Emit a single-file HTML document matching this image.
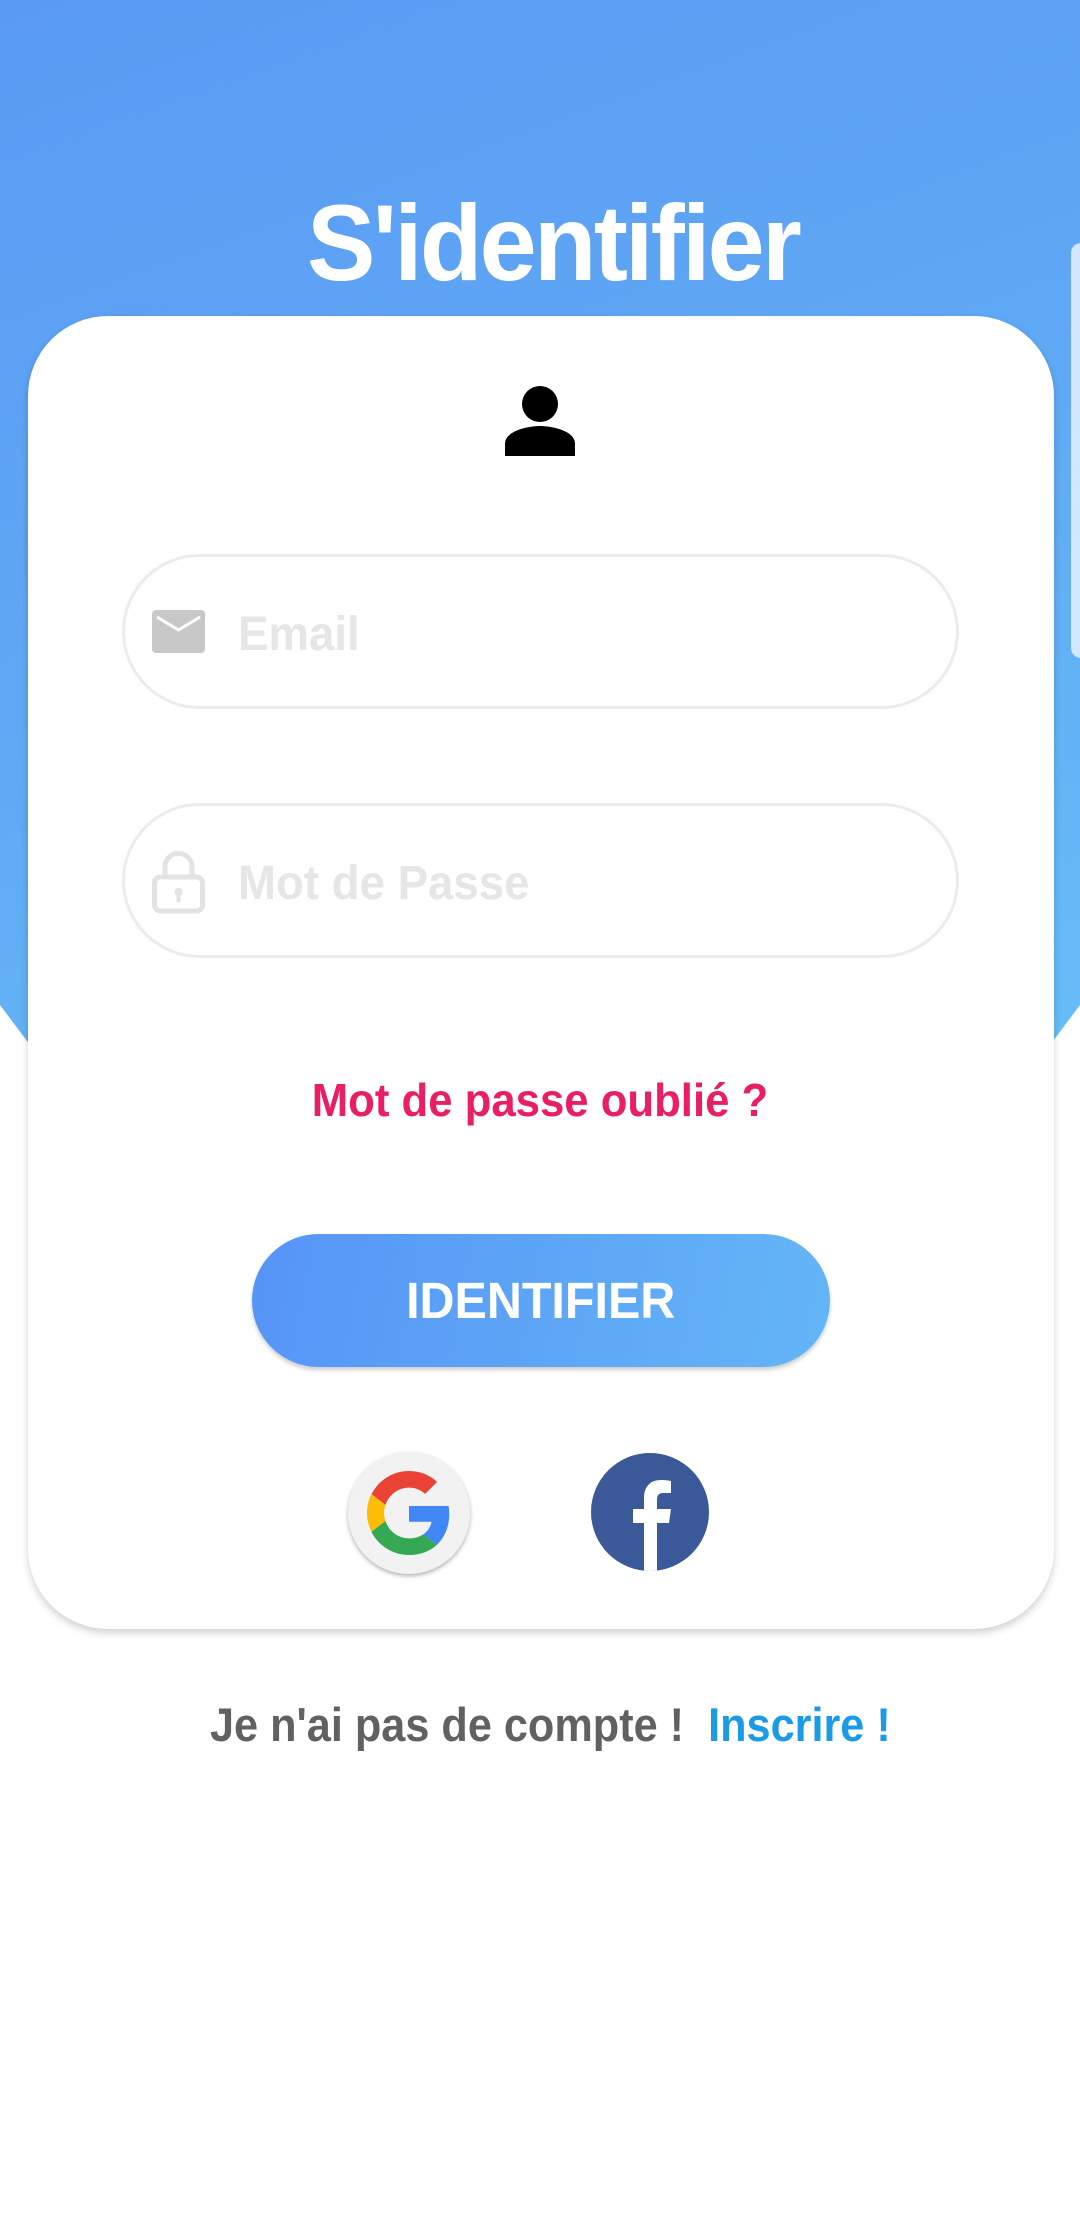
<!DOCTYPE html>
<html><head><meta charset="utf-8"><style>
*{margin:0;padding:0;box-sizing:border-box}
body{width:1080px;height:2220px;background:#fff;position:relative;overflow:hidden;font-family:"Liberation Sans",Arial,sans-serif;font-weight:bold}
.bg{position:absolute;left:0;top:0;width:1080px;height:1045px;background:linear-gradient(160deg,#5a9af3 0%,#60aaf5 55%,#66bdf7 100%);clip-path:polygon(0 0,1080px 0,1080px 1005px,1050px 1045px,30px 1045px,0 1005px)}
.side{position:absolute;left:1071px;top:243px;width:20px;height:415px;border-radius:10px;background:rgba(230,242,255,0.85)}
.title{position:absolute;left:13px;width:1080px;top:180px;text-align:center;color:#fff;font-size:108px;letter-spacing:-3px;transform:scaleX(0.95)}
.card{position:absolute;left:28px;top:316px;width:1026px;height:1313px;background:#fff;border-radius:80px;box-shadow:0 4px 8px rgba(0,0,0,0.18)}
.field{position:absolute;left:122px;width:837px;height:155px;border:3px solid #ececec;border-radius:80px}
.ph{position:absolute;left:113px;top:50px;font-size:48px;color:#e6e6e6;transform:scaleX(0.95);transform-origin:left}
.forgot{position:absolute;left:0;width:1080px;top:1073px;text-align:center;color:#e91e63;font-size:46px;transform:scaleX(0.95)}
.btn{position:absolute;left:252px;top:1234px;width:578px;height:133px;border-radius:67px;background:linear-gradient(100deg,#5694f6,#64b6f6);box-shadow:0 3px 4px rgba(0,0,0,0.2);color:#fff;font-size:51px;text-align:center;line-height:133px}
.btn span{display:inline-block;transform:scaleX(0.95)}
.g{position:absolute;left:348px;top:1452px;width:122px;height:122px;border-radius:50%;background:#f2f2f2;box-shadow:0 2px 4px rgba(0,0,0,0.3)}
.bottom{position:absolute;left:210px;top:1697px;font-size:47px;color:#616161;white-space:nowrap;transform:scaleX(0.92);transform-origin:left}
</style></head><body>
<div class="bg"></div>
<div class="side"></div>
<div class="title">S'identifier</div>
<div class="card"></div>
<svg style="position:absolute;left:505px;top:386px" width="70" height="70" viewBox="0 0 70 70"><circle cx="35" cy="18" r="18" fill="#000"/><path d="M0 70 V58 C0 44 25 40 35 40 C45 40 70 44 70 58 V70 Z" fill="#000"/></svg>
<div class="field" style="top:554px">
<svg style="position:absolute;left:27px;top:53px" width="53" height="43" viewBox="0 0 53 43"><rect width="53" height="43" rx="4" fill="#c8c8c8"/><path d="M5 7 L26.5 20 L48 7" stroke="#fff" stroke-width="3" fill="none"/></svg>
<div class="ph">Email</div></div>
<div class="field" style="top:803px">
<svg style="position:absolute;left:27px;top:45px" width="53" height="63" viewBox="0 0 53 63"><path d="M13 27 V16 A13.5 13.5 0 0 1 40 16 V27" stroke="#e3e3e3" stroke-width="5" fill="none"/><rect x="2.5" y="26" width="48" height="34" rx="6" stroke="#e3e3e3" stroke-width="5" fill="none"/><circle cx="26.5" cy="41" r="4" fill="#e3e3e3"/><rect x="24.5" y="42" width="4" height="9" fill="#e3e3e3"/></svg>
<div class="ph">Mot de Passe</div></div>
<div class="forgot">Mot de passe oublié ?</div>
<div class="btn"><span>IDENTIFIER</span></div>
<div class="g"><svg style="position:absolute;left:19px;top:19px" width="84" height="84" viewBox="0 0 48 48"><path fill="#EA4335" d="M24 9.5c3.54 0 6.71 1.22 9.21 3.6l6.85-6.850C35.9 2.38 30.47 0 24 0 14.62 0 6.51 5.38 2.56 13.22l7.98 6.19C12.43 13.720 17.74 9.5 24 9.5z"/><path fill="#4285F4" d="M46.98 24.55c0-1.57-.15-3.09-.38-4.55H24v9.02h12.94c-.58 2.96-2.26 5.48-4.78 7.18l7.73 6c4.51-4.18 7.09-10.36 7.09-17.65z"/><path fill="#FBBC05" d="M10.53 28.59c-.48-1.45-.76-2.99-.76-4.59s.27-3.14.76-4.59l-7.98-6.19C.92 16.46 0 20.12 0 24c0 3.88.92 7.54 2.56 10.78l7.97-6.19z"/><path fill="#34A853" d="M24 48c6.48 0 11.93-2.130 15.89-5.81l-7.73-6c-2.15 1.45-4.92 2.3-8.16 2.3-6.26 0-11.570-4.22-13.47-9.91l-7.98 6.19C6.51 42.62 14.62 48 24 48z"/></svg></div>
<svg style="position:absolute;left:591px;top:1453px" width="118" height="118" viewBox="0 0 118 118"><defs><clipPath id="c"><circle cx="59" cy="59" r="59"/></clipPath></defs><circle cx="59" cy="59" r="59" fill="#3b5998"/><path clip-path="url(#c)" d="M53 118 V70 H42 V56 H53 V45 C53 33 60 27 70 27 C74 27 78 27.5 80 28 V40 H73 C67 40 66 43 66 47 V56 H80 L78 70 H66 V118 Z" fill="#fff"/></svg>
<div class="bottom">Je n'ai pas de compte !&nbsp; <span style="color:#1b9ae6">Inscrire !</span></div>
</body></html>
